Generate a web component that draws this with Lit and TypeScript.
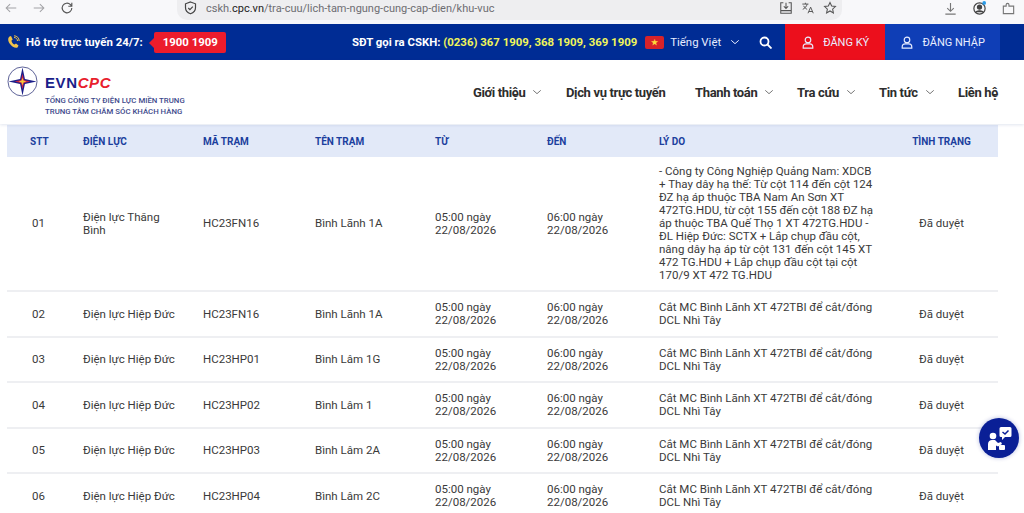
import { LitElement, html, css, svg } from 'lit';
import { customElement } from 'lit/decorators.js';

const REASON = 'Cắt MC Bình Lãnh XT 472TBI để cắt/đóng DCL Nhì Tây';
const FROM = ['05:00 ngày', '22/08/2026'];
const TO = ['06:00 ngày', '22/08/2026'];

const rows = [
    { stt: '01', unit: 'Điện lực Thăng Bình', code: 'HC23FN16', name: 'Bình Lãnh 1A', reason: '- Công ty Công Nghiệp Quảng Nam: XDCB + Thay dây hạ thế: Từ cột 114 đến cột 124 ĐZ hạ áp thuộc TBA Nam An Sơn XT 472TG.HDU, từ cột 155 đến cột 188 ĐZ hạ áp thuộc TBA Quế Thọ 1 XT 472TG.HDU - ĐL Hiệp Đức: SCTX + Lắp chụp đầu cột, nâng dây hạ áp từ cột 131 đến cột 145 XT 472 TG.HDU + Lắp chụp đầu cột tại cột 170/9 XT 472 TG.HDU' },
    { stt: '02', unit: 'Điện lực Hiệp Đức', code: 'HC23FN16', name: 'Bình Lãnh 1A', reason: REASON },
    { stt: '03', unit: 'Điện lực Hiệp Đức', code: 'HC23HP01', name: 'Bình Lâm 1G', reason: REASON },
    { stt: '04', unit: 'Điện lực Hiệp Đức', code: 'HC23HP02', name: 'Bình Lâm 1', reason: REASON },
    { stt: '05', unit: 'Điện lực Hiệp Đức', code: 'HC23HP03', name: 'Bình Lâm 2A', reason: REASON },
    { stt: '06', unit: 'Điện lực Hiệp Đức', code: 'HC23HP04', name: 'Bình Lâm 2C', reason: REASON },
];

const chevron = svg`<path d="M1.500 4l4.500 4 4.500-4" fill="none" stroke="currentColor" stroke-width="1.200"/>`;
const user = svg`<circle cx="8" cy="5" r="3.200" fill="none" stroke="currentColor" stroke-width="1.300"/><path d="M2.500 14.500v-1.500c0-2 1.500-3.500 3.500-3.500h4c2 0 3.500 1.500 3.500 3.500v1.500z" fill="none" stroke="currentColor" stroke-width="1.300"/>`;

@customElement('app-root')
export class AppRoot extends LitElement {
    static styles = css`
        :host {
            display: block;
            width: 1024px;
            height: 513px;
            overflow: hidden;
            position: relative;
            background: #fff;
            font-family: Roboto, sans-serif;
            color: #3a3a3a;
        }

        /* browser chrome */
        .chrome {
            height: 24px;
            background: #f8f8fa;
            display: flex;
            align-items: flex-start;
            color: #a2a2a6;
        }
        .nav-icons {
            width: 177px;
            display: flex;
            gap: 14px;
            padding: 1px 0 0 4px;
            box-sizing: border-box;
        }
        .nav-icons svg { width: 14px; height: 14px; }
        .nav-icons svg:last-child { color: #555; }
        .url {
            width: 665px;
            height: 20px;
            background: #eeeef0;
            border-radius: 0 0 10px 10px;
            display: flex;
            align-items: center;
            padding: 0 5px 4px 7px;
            box-sizing: border-box;
            font-size: 11px;
            color: #6d6d72;
            gap: 9px;
        }
        .url b { font-weight: 400; color: #222; }
        .url-text { flex: 1; }
        .url-tools { display: flex; gap: 8px; color: #555; }
        .url-tools svg { width: 14px; height: 14px; display: block; }
        .win-tools {
            flex: 1;
            display: flex;
            justify-content: flex-end;
            gap: 14px;
            padding: 1px 8px 0 0;
            color: #777;
        }
        .win-tools svg { width: 15px; height: 15px; display: block; }

        /* blue bar */
        .topbar {
            height: 36px;
            background: #002c94;
            color: #fff;
            display: flex;
            align-items: center;
            font-size: 11.400px;
            font-weight: 700;
            white-space: nowrap;
        }
        .support {
            display: flex;
            align-items: center;
            padding-left: 7px;
            width: 352px;
            box-sizing: border-box;
        }
        .support svg { width: 13px; height: 14px; margin-right: 6px; }
        .hotline {
            position: relative;
            margin-left: 11px;
            background: #ec1c2c;
            border-radius: 2px;
            height: 21px;
            line-height: 21px;
            padding: 0 8px 0 9px;
            font-size: 11.400px;
        }
        .hotline::before {
            content: '';
            position: absolute;
            left: -5px;
            top: 6px;
            border: 5px solid transparent;
            border-left: 0;
            border-right-color: #ec1c2c;
        }
        .yellow { color: #f0f55a; }
        .flag {
            width: 19px;
            height: 13px;
            background: #d8232a;
            border-radius: 2px;
            margin: 0 6px 0 8px;
            display: flex;
            align-items: center;
            justify-content: center;
            color: #ffd83a;
            font-size: 8px;
        }
        .lang {
            font-weight: 400;
            color: #e6ecff;
            display: flex;
            align-items: center;
            gap: 9px;
        }
        .lang svg { width: 10px; height: 12px; }
        .search { width: 13px; height: 13px; margin-left: 19px; margin-right: 13px; }
        .btn {
            height: 36px;
            display: flex;
            align-items: center;
            justify-content: center;
            gap: 8px;
            font-size: 11px;
            font-weight: 400;
            color: #e8edff;
        }
        .btn svg { width: 14px; height: 15px; }
        .btn.red { width: 100px; background: #ec0f1c; }
        .btn.blue { width: 115px; background: #0f3eb6; }

        /* main nav */
        .nav {
            height: 64px;
            display: flex;
            align-items: center;
            box-shadow: 0 1px 3px rgba(40, 70, 140, 0.14);
            position: relative;
        }
        .logo {
            display: flex;
            gap: 7px;
            padding: 6px 0 0 7px;
            width: 473px;
            box-sizing: border-box;
            align-self: flex-start;
        }
        .logo svg { width: 31px; height: 31px; }
        .brand {
            margin-top: 9px;
            font-family: "Liberation Sans", sans-serif;
            font-size: 15px;
            font-weight: 700;
            line-height: 15px;
            color: #1b1f8a;
            letter-spacing: 0.6px;
        }
        .brand i { color: #e8202c; }
        .tagline {
            margin-top: 5px;
            font-size: 7.800px;
            line-height: 11px;
            font-weight: 500;
            color: #3e4a8c;
            white-space: nowrap;
        }
        .links {
            display: flex;
            align-items: center;
            font-size: 13px;
            font-weight: 700;
            letter-spacing: -0.35px;
            color: #2d2d2d;
            white-space: nowrap;
        }
        .links span { display: flex; align-items: center; }
        .links svg { width: 10px; height: 12px; margin-left: 7px; color: #777; }

        /* table */
        .wrap { padding: 1px 26px 0 7px; }
        table {
            border-collapse: collapse;
            table-layout: fixed;
            width: 991px;
            font-size: 11.500px;
            line-height: 13px;
        }
        th {
            background: #e2e9f8;
            height: 32px;
            padding: 0;
            font-size: 10px;
            font-weight: 700;
            color: #1c3f9e;
            text-align: left;
        }
        td {
            padding: 9px 0 8.500px;
            border-bottom: 2px solid #eeeff2;
            vertical-align: middle;
        }
        tbody tr:first-child td { padding-top: 8px; padding-bottom: 8px; }
        .c { text-align: center; }
        th.first { padding-left: 23px; }
        td.first { padding-left: 25px; }
        td.unit { padding-right: 25px; }
        td.reason { padding-right: 10px; }

        .help {
            position: absolute;
            left: 979px;
            top: 418px;
            width: 40px;
            height: 40px;
            border-radius: 50%;
            background: #0a1f96;
            display: flex;
            align-items: center;
            justify-content: center;
            box-shadow: 0 0 4px rgba(10, 31, 150, 0.3);
        }
        .help svg { width: 28px; height: 28px; }
    `;

    render() {
        return html`
            <div class="chrome">
                <div class="nav-icons">
                    <svg viewBox="0 0 16 16" fill="none" stroke="currentColor" stroke-width="1.200"><path d="M14 8H3M7 3.500L2.500 8 7 12.500"/></svg>
                    <svg viewBox="0 0 16 16" fill="none" stroke="currentColor" stroke-width="1.200"><path d="M2 8h11M9 3.500L13.500 8 9 12.500"/></svg>
                    <svg viewBox="0 0 16 16" fill="none" stroke="currentColor" stroke-width="1.300"><path d="M13.500 8a5.500 5.500 0 1 1-1.600-3.900L13.500 6M13.500 2v4h-4"/></svg>
                </div>
                <div class="url">
                    <svg width="13" height="14" viewBox="0 0 13 14" fill="none" stroke="#444" stroke-width="1.200"><path d="M6.500 1l5 1.800v4c0 3-2.200 5-5 6-2.800-1-5-3-5-6v-4z"/><path d="M4.300 7l1.600 1.600 2.900-3"/></svg>
                    <span class="url-text">cskh.<b>cpc.vn</b>/tra-cuu/lich-tam-ngung-cung-cap-dien/khu-vuc</span>
                    <span class="url-tools">
                        <svg viewBox="0 0 16 16" fill="none" stroke="currentColor" stroke-width="1.200"><path d="M5 2H2v12h12V2h-3M2 11h12M8 2v6M5.500 6L8 8.500 10.500 6"/></svg>
                        <svg viewBox="0 0 16 16" fill="none" stroke="currentColor" stroke-width="1.100"><path d="M1.500 3.500h7M5 2v1.500M7 3.500c-.5 2.500-2.500 5-5 6M3 5.500c1 2 2.500 3.300 4 4M8 14l3-7 3 7M9 12h4"/></svg>
                        <svg viewBox="0 0 16 16" fill="none" stroke="currentColor" stroke-width="1.200"><path d="M8 1.800l1.900 4 4.300.5-3.200 3 .9 4.300L8 11.400l-3.900 2.200.9-4.300-3.200-3 4.300-.5z"/></svg>
                    </span>
                </div>
                <div class="win-tools">
                    <svg viewBox="0 0 16 16" fill="none" stroke="currentColor" stroke-width="1.200"><path d="M8 2v8.500M4.500 7.500L8 11l3.500-3.500M2.500 14h11"/></svg>
                    <svg viewBox="0 0 16 16" fill="none" stroke="#444" stroke-width="1.300"><circle cx="8" cy="8" r="6"/><circle cx="8" cy="6.500" r="2.200" fill="#444"/><path d="M4 12c1-2 7-2 8 0" fill="#444"/><circle cx="13" cy="2" r="2" fill="#2a9be8" stroke="none"/></svg>
                    <svg viewBox="0 0 16 16" fill="none" stroke="currentColor" stroke-width="1.200"><path d="M2.500 5.500h3V4a1.500 1.500 0 0 1 3 0v1.500h5v8h-11z"/></svg>
                </div>
            </div>

            <div class="topbar">
                <div class="support">
                    <svg viewBox="0 0 13 14"><path d="M2.500 1.500c-2 1.500-1.500 5 .5 7.500s5 4.500 7.500 3.500l1-2-2.500-2-1.500 1c-1.500-.5-3-2.500-3-4l1.200-1L4 1z" fill="#f0c34a"/><path d="M7 2.500c2 0 3.500 1.500 3.500 3.500M7 .8c3 0 5.200 2.200 5.200 5.200" fill="none" stroke="#f0c34a" stroke-width="1"/></svg>
                    Hỗ trợ trực tuyến 24/7:
                    <span class="hotline">1900 1909</span>
                </div>
                <span>SĐT gọi ra CSKH: <span class="yellow">(0236) 367 1909, 368 1909, 369 1909</span></span>
                <span class="flag">★</span>
                <span class="lang">Tiếng Việt <svg viewBox="0 0 12 12">${chevron}</svg></span>
                <svg class="search" viewBox="0 0 13 13" fill="none" stroke="#fff" stroke-width="1.800"><circle cx="5.500" cy="5.500" r="4"/><path d="M8.500 8.500l4 4"/></svg>
                <div class="btn red"><svg viewBox="0 0 16 16">${user}</svg>ĐĂNG KÝ</div>
                <div class="btn blue"><svg viewBox="0 0 16 16">${user}</svg>ĐĂNG NHẬP</div>
            </div>

            <div class="nav">
                <div class="logo">
                    <svg viewBox="0 0 32 32">
                        <circle cx="16" cy="16" r="15" fill="#fff" stroke="#5a5f95" stroke-width="1"/>
                        <path d="M16 1.500l2.500 12 12 2.500-12 2.500-2.500 12-2.500-12-12-2.500 12-2.500z" fill="#1b1f8a"/>
                        <path d="M16 8l1.500 6.500L24 16l-6.500 1.500L16 24l-1.500-6.500L8 16l6.500-1.500z" fill="#c9204a"/>
                        <path d="M16 12l1 3 3 1-3 1-1 3-1-3-3-1 3-1z" fill="#f5c63a"/>
                    </svg>
                    <div>
                        <div class="brand">EVN<i>CPC</i></div>
                        <div class="tagline">TỔNG CÔNG TY ĐIỆN LỰC MIỀN TRUNG<br />TRUNG TÂM CHĂM SÓC KHÁCH HÀNG</div>
                    </div>
                </div>
                <div class="links">
                    <span style="width:93px">Giới thiệu <svg viewBox="0 0 12 12">${chevron}</svg></span>
                    <span style="width:129px">Dịch vụ trực tuyến</span>
                    <span style="width:102px">Thanh toán <svg viewBox="0 0 12 12">${chevron}</svg></span>
                    <span style="width:82px">Tra cứu <svg viewBox="0 0 12 12">${chevron}</svg></span>
                    <span style="width:79px">Tin tức <svg viewBox="0 0 12 12">${chevron}</svg></span>
                    <span>Liên hệ</span>
                </div>
            </div>

            <div class="wrap">
                <table>
                    <colgroup>
                        <col style="width:76px" /><col style="width:120px" /><col style="width:112px" />
                        <col style="width:120px" /><col style="width:112px" /><col style="width:112px" />
                        <col style="width:226px" /><col style="width:113px" />
                    </colgroup>
                    <thead>
                        <tr>
                            <th class="first">STT</th><th>ĐIỆN LỰC</th><th>MÃ TRẠM</th><th>TÊN TRẠM</th>
                            <th>TỪ</th><th>ĐẾN</th><th>LÝ DO</th><th class="c">TÌNH TRẠNG</th>
                        </tr>
                    </thead>
                    <tbody>
                        ${rows.map(r => html`
                            <tr>
                                <td class="first">${r.stt}</td>
                                <td class="unit">${r.unit}</td>
                                <td>${r.code}</td>
                                <td>${r.name}</td>
                                <td>${FROM[0]}<br />${FROM[1]}</td>
                                <td>${TO[0]}<br />${TO[1]}</td>
                                <td class="reason">${r.reason}</td>
                                <td class="c">Đã duyệt</td>
                            </tr>
                        `)}
                    </tbody>
                </table>
            </div>

            <div class="help">
                <svg viewBox="0 0 28 28" fill="#fff">
                    <path d="M16 3h9a1.500 1.500 0 0 1 1.500 1.500v7A1.500 1.500 0 0 1 25 13h-5l-3 3v-3h-1a1.500 1.500 0 0 1-1.500-1.500v-7A1.500 1.500 0 0 1 16 3z"/>
                    <path d="M17.500 8l2.500 2 3.500-3.500" fill="none" stroke="#0a1f96" stroke-width="1.500"/>
                    <circle cx="8" cy="12" r="3.300"/>
                    <path d="M3 26v-6c0-2.500 2-4 4-4h3l3 3 3-1 1 2-4 2.500-2-1v4.500z"/>
                    <rect x="14" y="21" width="6" height="5" rx="1"/>
                </svg>
            </div>
        `;
    }
}

declare global {
    interface HTMLElementTagNameMap {
        'app-root': AppRoot;
    }
}
